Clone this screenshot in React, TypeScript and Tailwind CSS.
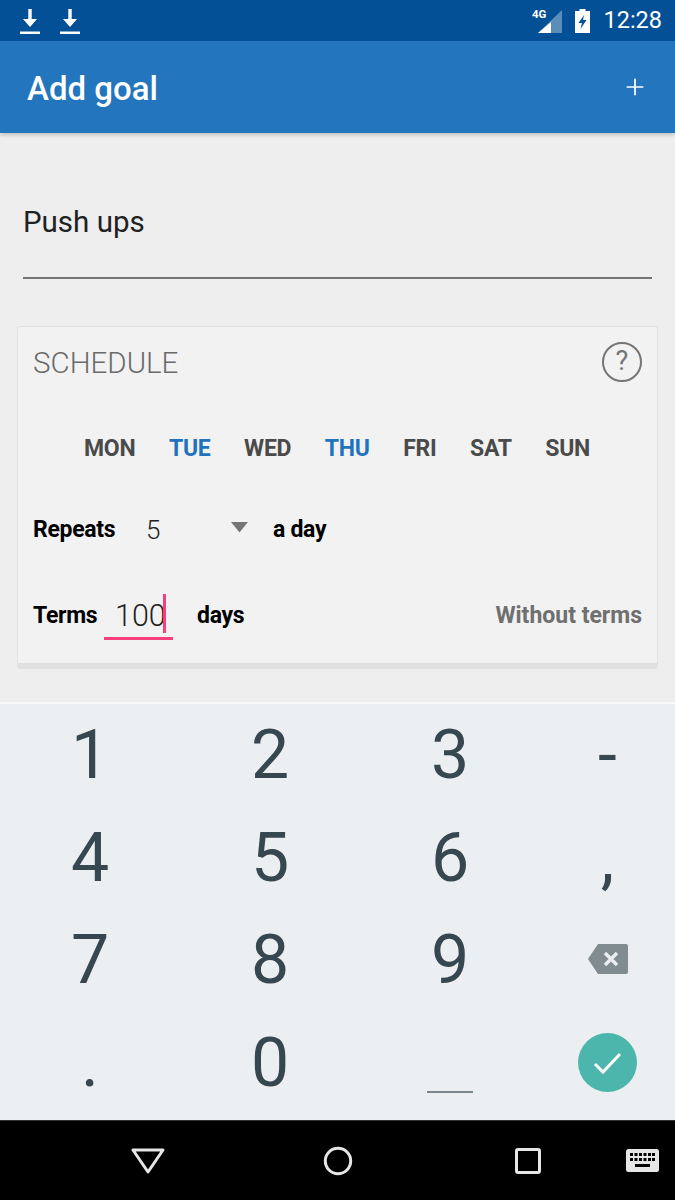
import { Plus } from 'lucide-react';

const days = [
  { label: 'MON', active: false },
  { label: 'TUE', active: true },
  { label: 'WED', active: false },
  { label: 'THU', active: true },
  { label: 'FRI', active: false },
  { label: 'SAT', active: false },
  { label: 'SUN', active: false },
];

const DownloadIcon = () => (
  <svg width="20" height="26" viewBox="0 0 20 26" fill="white">
    <path d="M8.300 0h3.400v10H17l-7 8-7-8h5.300z" />
    <rect x="0" y="22.500" width="20" height="2.500" />
  </svg>
);

const StatusBar = () => (
  <div className="h-[41px] bg-[#045097] flex items-center pl-[20px] pr-[13px] text-white">
    <div className="flex gap-[19.500px] mt-[2px]">
      <DownloadIcon />
      <DownloadIcon />
    </div>
    <div className="ml-auto flex items-center">
      <svg width="31" height="26" viewBox="0 0 31 26">
        <path d="M30 2v23H6z" fill="white" fillOpacity="0.35" />
        <path d="M19 14v11H6z" fill="white" />
        <text x="0" y="10" fontSize="11.500" fontWeight="700" fill="white" fontFamily="Roboto, sans-serif">
          4G
        </text>
      </svg>
      <svg width="15" height="24" viewBox="0 0 15 24" className="ml-[12px]">
        <path
          fillRule="evenodd"
          d="M4.500 0h6v2H15v22H0V2h4.500zM9 6L3.500 14H7l-1.500 6L11.500 11H8z"
          fill="white"
        />
      </svg>
      <span className="ml-[13px] text-[23.500px] leading-none">12:28</span>
    </div>
  </div>
);

const Card = () => (
  <div className="mx-[17px] mt-[47px] h-[343px] rounded-[3px] border border-[#e2e2e2] border-b-[6px] border-b-[#e0e0e0] bg-[#f2f2f2] px-[15px]">
    <div className="flex items-center justify-between pt-[16px]">
      <span className="text-[29.500px] leading-[41px] font-light text-[#6a6a6a]">SCHEDULE</span>
      <div className="mt-[-4px] flex h-[40px] w-[40px] items-center justify-center rounded-full border-[2.500px] border-[#757575] text-[27px] leading-none text-[#757575]">
        ?
      </div>
    </div>
    <div className="mt-[50px] flex justify-between pl-[51px] pr-[52px]">
      {days.map((day) => (
        <span
          key={day.label}
          className={`text-[23px] leading-[30px] font-bold tracking-[-0.3px] ${day.active ? 'text-[#1f72bd]' : 'text-[#4a4a4a]'}`}
        >
          {day.label}
        </span>
      ))}
    </div>
    <div className="mt-[48px] flex h-[36px] items-center text-[23px] font-bold tracking-[-0.3px] text-black">
      <span className="w-[113px]">Repeats</span>
      <span className="w-[85px] font-light text-[26px] tracking-normal text-[#222222]">5</span>
      <svg width="17" height="11" viewBox="0 0 17 11" className="mt-[-5px]">
        <path d="M0 0h17L8.500 10.500z" fill="#757575" />
      </svg>
      <span className="ml-[25px]">a day</span>
    </div>
    <div className="mt-[50px] flex h-[36px] items-center text-[23px] font-bold tracking-[-0.3px] text-black">
      <span className="w-[71px]">Terms</span>
      <div className="relative mt-[-2px] h-[50px] w-[69px] pl-[11px] pt-[6px] border-b-[3px] border-[#f73f80] text-[30.500px] font-light tracking-normal leading-[40px] text-[#222222]">
        100
        <span className="absolute left-[59px] top-[4px] h-[39px] w-[2.500px] bg-[#f73f80]" />
      </div>
      <span className="ml-[24px]">days</span>
      <span className="ml-auto tracking-normal text-[#6f6f6f]">Without terms</span>
    </div>
  </div>
);

const Backspace = () => (
  <svg width="40" height="30" viewBox="0 0 40 30">
    <path d="M10 0h28a2 2 0 0 1 2 2v26a2 2 0 0 1-2 2H10L0 15z" fill="#808c8f" />
    <path d="M17 9l12 12M29 9L17 21" stroke="#eceff1" strokeWidth="3.400" />
  </svg>
);

const Key = ({ label }: { label: string }) => (
  <div className="flex items-center justify-center text-[68px] leading-none text-[#37474f]">{label}</div>
);

const Keyboard = () => (
  <div className="border-t-2 border-[#f8f9fa] bg-[#eceff1] h-[418px] pb-[6px] grid grid-cols-[180px_180px_180px_135px] grid-rows-4">
    {['1', '2', '3'].map((k) => (
      <Key key={k} label={k} />
    ))}
    <Key label="-" />
    {['4', '5', '6'].map((k) => (
      <Key key={k} label={k} />
    ))}
    <Key label="," />
    {['7', '8', '9'].map((k) => (
      <Key key={k} label={k} />
    ))}
    <div className="flex items-center justify-center pb-[2px]">
      <Backspace />
    </div>
    <Key label="." />
    <Key label="0" />
    <div className="flex items-end justify-center pb-[21px]">
      <div className="h-[2px] w-[46px] bg-[#7b878c]" />
    </div>
    <div className="flex items-center justify-center">
      <div className="flex h-[59px] w-[59px] items-center justify-center rounded-full bg-[#4db6ac]">
        <svg width="30" height="24" viewBox="0 0 30 24" fill="none">
          <path d="M2 13l8 8L27 3" stroke="white" strokeWidth="3" />
        </svg>
      </div>
    </div>
  </div>
);

const NavBar = () => (
  <div className="h-[80px] bg-black border-t border-[#333333] relative text-[#e6e6e6]">
    <svg width="34" height="26" viewBox="0 0 34 26" fill="none" className="absolute left-[131px] top-[27px]">
      <path d="M2 2h30L17 24z" stroke="currentColor" strokeWidth="3" strokeLinejoin="round" />
    </svg>
    <svg width="30" height="30" viewBox="0 0 30 30" fill="none" className="absolute left-[323px] top-[25px]">
      <circle cx="15" cy="15" r="12.700" stroke="currentColor" strokeWidth="3" />
    </svg>
    <svg width="26" height="26" viewBox="0 0 26 26" fill="none" className="absolute left-[515px] top-[27px]">
      <rect x="1.500" y="1.500" width="23" height="23" rx="1.500" stroke="currentColor" strokeWidth="3" />
    </svg>
    <svg width="33" height="23" viewBox="0 0 33 23" className="absolute left-[626px] top-[28px]">
      <rect width="33" height="23" rx="2.500" fill="currentColor" />
      <path
        d="M4 4h3v3H4zM8.500 4h3v3h-3zM13 4h3v3h-3zM17.500 4h3v3h-3zM22 4h3v3h-3zM26 4h3v3h-3zM4 9h3v3H4zM8.500 9h3v3h-3zM13 9h3v3h-3zM17.500 9h3v3h-3zM22 9h3v3h-3zM26 9h3v3h-3zM9 15h15v3H9z"
        fill="#000"
      />
    </svg>
  </div>
);

export default function App() {
  return (
    <div className="w-[675px] h-[1200px] bg-[#eeeeee] overflow-hidden font-['Roboto',sans-serif]">
      <StatusBar />
      <div className="h-[92px] bg-[#2375be] flex items-center justify-between pl-[27px] pr-[27px] shadow-[0_2px_4px_rgba(0,0,0,0.2)] relative">
        <span className="mt-[3px] text-[33px] font-medium text-white">Add goal</span>
        <Plus size={26} strokeWidth={1.600} color="white" />
      </div>
      <div className="h-[569px]">
        <div className="mx-[23px] pt-[69px] h-[146px] border-b-2 border-[#757575]">
          <span className="text-[29.500px] leading-[40px] text-[#212121]">Push ups</span>
        </div>
        <Card />
      </div>
      <Keyboard />
      <NavBar />
    </div>
  );
}
